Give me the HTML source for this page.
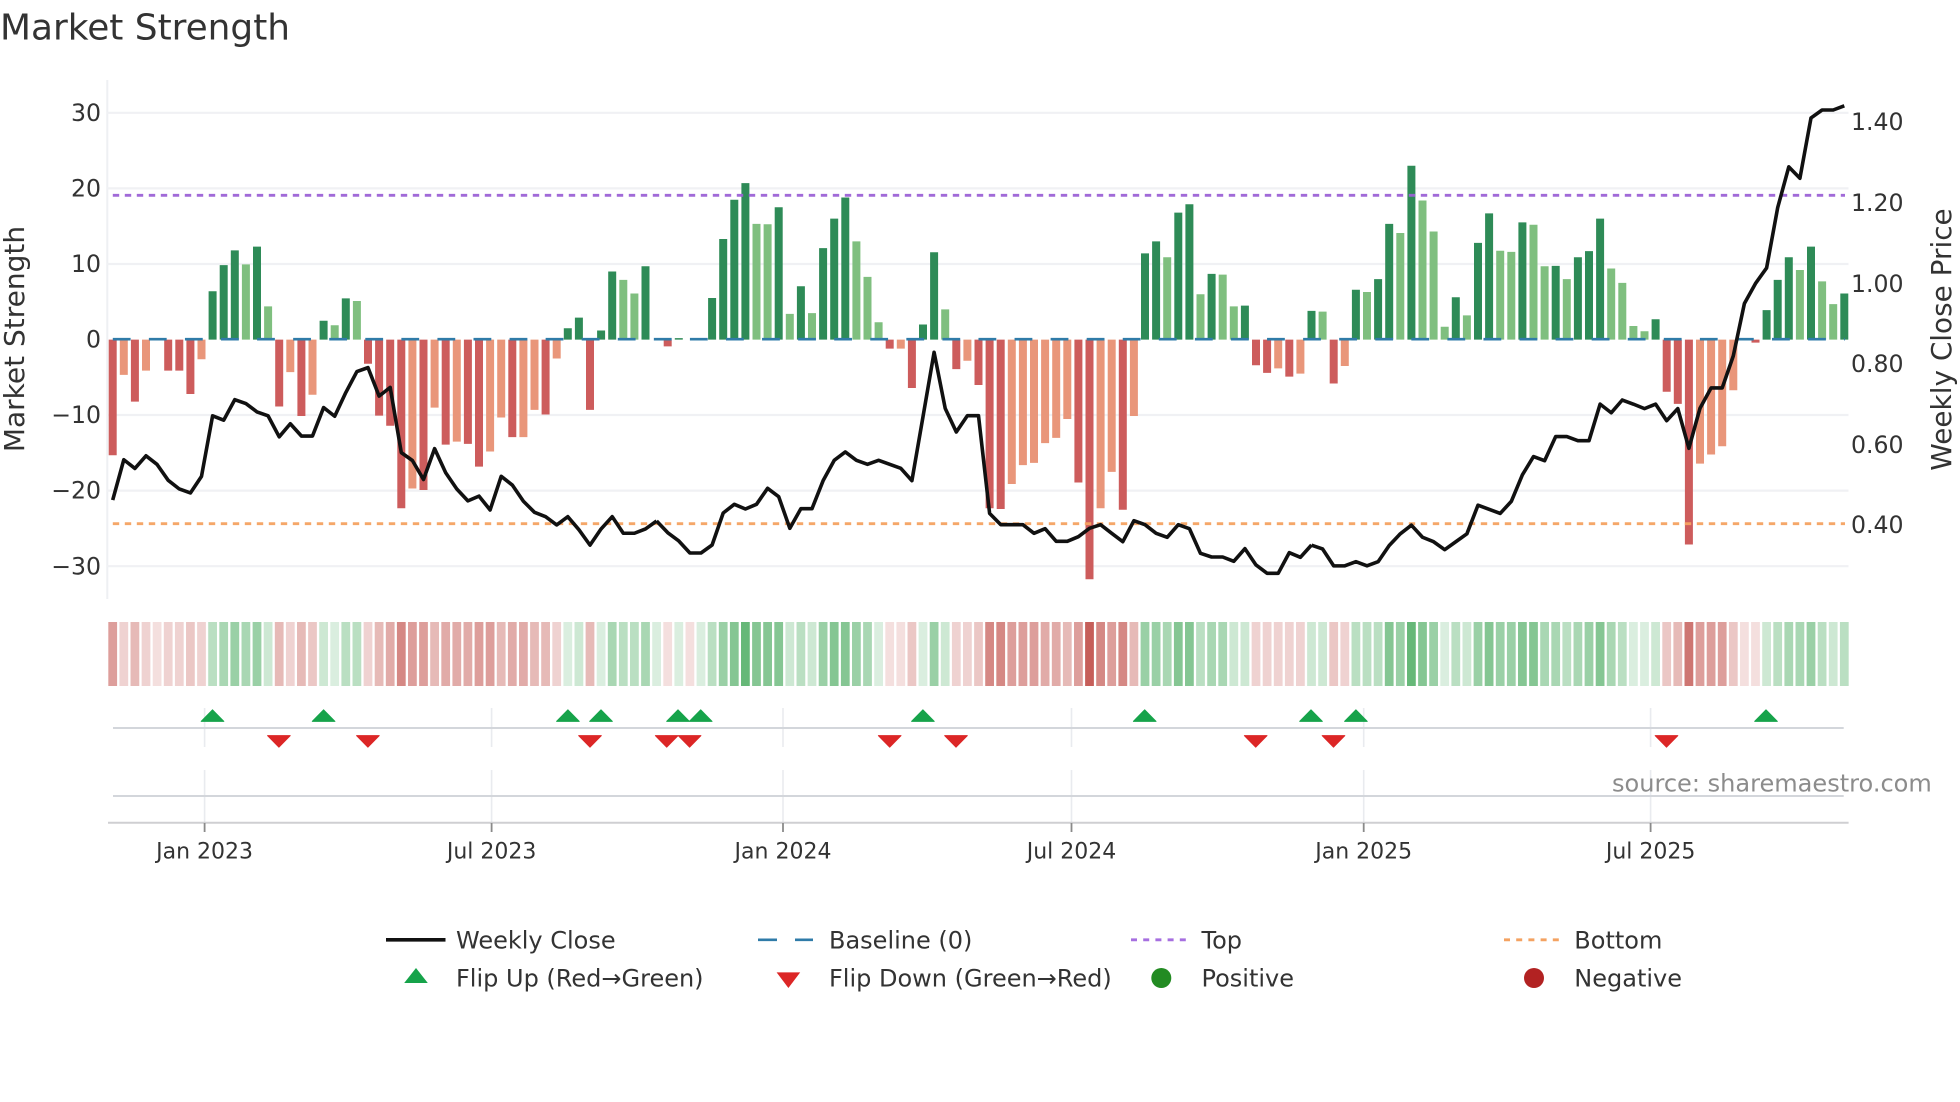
<!DOCTYPE html>
<html><head><meta charset="utf-8"><title>Market Strength</title>
<style>html,body{margin:0;padding:0;background:#fff}svg{display:block}text{font-family:"DejaVu Sans","Liberation Sans",sans-serif;fill:#333}</style></head>
<body>
<svg xmlns="http://www.w3.org/2000/svg" width="1960" height="1102" viewBox="0 0 1960 1102">
<rect width="1960" height="1102" fill="#fff"/>
<text x="0" y="39.5" font-size="35.9">Market Strength</text>
<!-- grid -->
<path d="M107.3 80V599" stroke="#eef0f3" stroke-width="2" fill="none"/>
<path d="M107 112.8H1848.5M107 188.4H1848.5M107 264H1848.5M107 415H1848.5M107 490.6H1848.5M107 566.2H1848.5" stroke="#f0f1f4" stroke-width="2.2" fill="none"/>
<!-- bars -->
<g transform="translate(112.7 339.6) scale(11.1 -7.56)" fill="none" stroke-width=".72">
<path stroke="#cd5c5c" d="M0 0V-15.3M2 0V-8.2M5 0V-4.1M6 0V-4.1M7 0V-7.2M15 0V-8.85M17 0V-10.1M23 0V-3.2M24 0V-10.05M25 0V-11.4M26 0V-22.3M28 0V-19.9M30 0V-13.9M32 0V-13.8M33 0V-16.8M36 0V-12.9M39 0V-9.9M43 0V-9.3M50 0V-.9M70 0V-1.2M72 0V-6.4M76 0V-3.9M78 0V-6M79 0V-22.3M80 0V-22.4M87 0V-18.9M88 0V-31.7M91 0V-22.5M103 0V-3.4M104 0V-4.4M106 0V-4.9M110 0V-5.8M140 0V-6.9M141 0V-8.5M142 0V-27.1M148 0V-.4"/>
<path stroke="#e9967a" d="M1 0V-4.66M3 0V-4.1M8 0V-2.6M16 0V-4.3M18 0V-7.3M27 0V-19.7M29 0V-9M31 0V-13.5M34 0V-14.8M35 0V-10.3M37 0V-12.9M38 0V-9.3M40 0V-2.5M71 0V-1.2M77 0V-2.8M81 0V-19.1M82 0V-16.6M83 0V-16.3M84 0V-13.7M85 0V-13M86 0V-10.5M89 0V-22.3M90 0V-17.5M92 0V-10.1M105 0V-3.8M107 0V-4.5M111 0V-3.5M143 0V-16.4M144 0V-15.2M145 0V-14.1M146 0V-6.7"/>
<path stroke="#2e8b57" d="M9 0V6.4M10 0V9.85M11 0V11.8M13 0V12.3M19 0V2.5M21 0V5.45M41 0V1.5M42 0V2.9M44 0V1.2M45 0V9M48 0V9.7M51 0V.2M54 0V5.5M55 0V13.3M56 0V18.5M57 0V20.7M60 0V17.5M62 0V7.05M64 0V12.1M65 0V16M66 0V18.8M73 0V2M74 0V11.55M93 0V11.4M94 0V13M96 0V16.8M97 0V17.9M99 0V8.7M102 0V4.5M108 0V3.8M112 0V6.6M114 0V8M115 0V15.3M117 0V23M121 0V5.6M123 0V12.8M124 0V16.7M127 0V15.5M130 0V9.75M132 0V10.9M133 0V11.7M134 0V16M139 0V2.7M149 0V3.9M150 0V7.9M151 0V10.9M153 0V12.3M156 0V6.1"/>
<path stroke="#7fbf7f" d="M12 0V9.95M14 0V4.4M20 0V1.9M22 0V5.1M46 0V7.9M47 0V6.1M61 0V3.4M63 0V3.5M58 0V15.3M59 0V15.25M67 0V13M68 0V8.3M69 0V2.3M75 0V4M95 0V10.9M98 0V6M100 0V8.6M101 0V4.4M109 0V3.7M113 0V6.3M116 0V14.1M118 0V18.4M119 0V14.3M120 0V1.7M122 0V3.2M125 0V11.75M126 0V11.6M128 0V15.2M129 0V9.7M131 0V8M135 0V9.4M136 0V7.5M137 0V1.8M138 0V1.1M152 0V9.2M154 0V7.7M155 0V4.7"/>
</g>
<!-- reference lines -->
<path d="M112.8 339.2H1845" stroke="#2f7ba8" stroke-width="2.6" stroke-dasharray="17.8 18.27" fill="none"/>
<path d="M112.8 195.3H1845" stroke="#9c62d6" stroke-opacity=".95" stroke-width="2.8" stroke-dasharray="6.4 5.6" fill="none"/>
<path d="M112.8 523.7H1845" stroke="#f4a261" stroke-opacity=".95" stroke-width="2.8" stroke-dasharray="6.4 5.6" fill="none"/>
<!-- weekly close -->
<g fill="none" stroke="#111" stroke-width="3.6" stroke-linejoin="round">
<polyline vector-effect="non-scaling-stroke" transform="translate(112.7 0) scale(11.1 .3953)" points="0,1265 1,1163 2,1185 3,1153 4,1175 5,1215 6,1237 7,1247 8,1205 9,1052 10,1063 11,1011 12,1021 13,1042 14,1052 15,1105 16,1072 17,1103 18,1103 19,1031 20,1053 21,993 22,940 23,930 24,1002 25,980 26,1145 27,1165 28,1213 29,1135 30,1196 31,1237 32,1267 33,1255 34,1290 35,1205 36,1227 37,1268 38,1296 39,1307 40,1328 41,1307 42,1340 43,1379 44,1338 45,1307 46,1349 47,1349 48,1338 49,1318"/>
<polyline vector-effect="non-scaling-stroke" transform="translate(112.7 120) scale(11.1 .33333)" points="49,1203 50,1238 51,1263 52,1299 53,1299 54,1275 55,1179 56,1153 57,1167 58,1153 59,1105 60,1130 61,1225 62,1166 63,1166 64,1082 65,1021 66,996 67,1021 68,1033 69,1021 70,1033 71,1045 72,1082 73,890 74,697 75,865 76,936 77,887 78,887 79,1180 80,1214 81,1214 82,1214 83,1240 84,1226 85,1264 86,1264 87,1250 88,1225 89,1214 90,1240 91,1265 92,1202 93,1214 94,1240 95,1252 96,1214 97,1226 98,1300 99,1311 100,1311 101,1324 102,1286 103,1335 104,1360 105,1360 106,1298 107,1312 108,1275"/>
<polyline vector-effect="non-scaling-stroke" transform="translate(112.7 80) scale(11.1 .34483)" points="108,1349 109,1360 110,1409 111,1409 112,1397 113,1409 114,1397 115,1350 116,1316 117,1291 118,1326 119,1339 120,1362 121,1339 122,1316 123,1233 124,1245 125,1257 126,1222 127,1145 128,1092 129,1104 130,1034 131,1034 132,1046 133,1046 134,940 135,965 136,928 137,940 138,953 139,940 140,988 141,953 142,1068 143,952 144,893 145,893 146,800 147,648 148,590 149,545 150,370 151,252 152,285 153,110 154,87 155,87 156,75"/>
</g>
<!-- y ticks -->
<g font-size="23.6" text-anchor="end">
<text x="101" y="121">30</text><text x="101" y="196.6">20</text><text x="101" y="272.1">10</text><text x="101" y="347.5">0</text><text x="101" y="423.1">−10</text><text x="101" y="498.7">−20</text><text x="101" y="574.3">−30</text>
</g>
<g font-size="23.6">
<text x="1851" y="129.8">1.40</text><text x="1851" y="210.8">1.20</text><text x="1851" y="291.8">1.00</text><text x="1851" y="372.2">0.80</text><text x="1851" y="452.9">0.60</text><text x="1851" y="533.2">0.40</text>
</g>
<text transform="translate(24 339) rotate(-90)" font-size="28" text-anchor="middle">Market Strength</text>
<text transform="translate(1951 339.5) rotate(-90)" font-size="27.9" text-anchor="middle">Weekly Close Price</text>
<!-- heat strip -->
<g transform="translate(112.7 622) scale(11.1 64)" fill="none" stroke-width=".79">
<g stroke="#c65e59">
<path stroke-opacity=".2" d="M4 0V1M50 0V1M52 0V1M70 0V1M71 0V1M147 0V1M148 0V1"/>
<path stroke-opacity=".28" d="M1 0V1M3 0V1M5 0V1M6 0V1M8 0V1M16 0V1M23 0V1M40 0V1M76 0V1M77 0V1M103 0V1M104 0V1M105 0V1M106 0V1M107 0V1M111 0V1"/>
<path stroke-opacity=".35" d="M7 0V1M18 0V1M72 0V1M78 0V1M110 0V1M140 0V1M146 0V1"/>
<path stroke-opacity=".43" d="M2 0V1M15 0V1M17 0V1M24 0V1M29 0V1M35 0V1M38 0V1M39 0V1M43 0V1M86 0V1M92 0V1M141 0V1"/>
<path stroke-opacity=".52" d="M25 0V1M30 0V1M31 0V1M32 0V1M36 0V1M37 0V1M84 0V1M85 0V1"/>
<path stroke-opacity=".6" d="M0 0V1M27 0V1M28 0V1M33 0V1M34 0V1M81 0V1M82 0V1M83 0V1M87 0V1M90 0V1M143 0V1M144 0V1M145 0V1"/>
<path stroke-opacity=".74" d="M26 0V1M79 0V1M80 0V1M89 0V1M91 0V1"/>
<path stroke-opacity=".85" d="M142 0V1"/>
<path d="M88 0V1"/>
</g>
<g stroke="#66b878">
<path stroke-opacity=".24" d="M20 0V1M41 0V1M44 0V1M49 0V1M51 0V1M53 0V1M69 0V1M73 0V1M120 0V1M137 0V1M138 0V1"/>
<path stroke-opacity=".33" d="M14 0V1M19 0V1M42 0V1M61 0V1M63 0V1M75 0V1M101 0V1M102 0V1M108 0V1M109 0V1M122 0V1M139 0V1M149 0V1M155 0V1"/>
<path stroke-opacity=".45" d="M9 0V1M21 0V1M22 0V1M46 0V1M47 0V1M54 0V1M62 0V1M98 0V1M112 0V1M113 0V1M114 0V1M121 0V1M131 0V1M136 0V1M150 0V1M154 0V1M156 0V1"/>
<path stroke-opacity=".56" d="M10 0V1M12 0V1M45 0V1M48 0V1M68 0V1M95 0V1M99 0V1M100 0V1M129 0V1M130 0V1M132 0V1M135 0V1M151 0V1M152 0V1"/>
<path stroke-opacity=".66" d="M11 0V1M13 0V1M55 0V1M64 0V1M67 0V1M74 0V1M93 0V1M94 0V1M116 0V1M119 0V1M123 0V1M125 0V1M126 0V1M133 0V1M153 0V1"/>
<path stroke-opacity=".8" d="M56 0V1M58 0V1M59 0V1M60 0V1M65 0V1M66 0V1M96 0V1M97 0V1M115 0V1M118 0V1M124 0V1M127 0V1M128 0V1M134 0V1"/>
<path d="M57 0V1M117 0V1"/>
</g>
</g>
<!-- lower panels -->
<path d="M204.6 708V747M491.6 708V747M783 708V747M1071.5 708V747M1363.7 708V747M1650.6 708V747M204.6 770V823M491.6 770V823M783 770V823M1071.5 770V823M1363.7 770V823M1650.6 770V823" stroke="#e9ebef" stroke-width="1.6" fill="none"/>
<path d="M113 728H1843.7M113 796H1843.7" stroke="#d3d6db" stroke-width="2" fill="none"/>
<path d="M108 822.8H1848.6" stroke="#cfcfd2" stroke-width="2" fill="none"/>
<path d="M204.6 823V832M491.6 823V832M783 823V832M1071.5 823V832M1363.7 823V832M1650.6 823V832" stroke="#8a8a8a" stroke-width="1.8" fill="none"/>
<path fill="#16a34a" stroke="#16a34a" stroke-width="1" stroke-linejoin="round" d="M212.5 709.8l11.3 11.6h-22.6zM323.6 709.8l11.3 11.6h-22.6zM567.9 709.8l11.3 11.6h-22.6zM601 709.8l11.3 11.6h-22.6zM678 709.8l11.3 11.6h-22.6zM700.7 709.8l11.3 11.6h-22.6zM922.9 709.8l11.3 11.6h-22.6zM1144.7 709.8l11.3 11.6h-22.6zM1311 709.8l11.3 11.6h-22.6zM1355.9 709.8l11.3 11.6h-22.6zM1766 709.8l11.3 11.6h-22.6z"/>
<path fill="#dc2626" stroke="#dc2626" stroke-width="1" stroke-linejoin="round" d="M278.9 747.2l-11.3-11.6h22.6zM367.9 747.2l-11.3-11.6h22.6zM590 747.2l-11.3-11.6h22.6zM666.7 747.2l-11.3-11.6h22.6zM689.6 747.2l-11.3-11.6h22.6zM889.7 747.2l-11.3-11.6h22.6zM956 747.2l-11.3-11.6h22.6zM1255.7 747.2l-11.3-11.6h22.6zM1333.5 747.2l-11.3-11.6h22.6zM1666.5 747.2l-11.3-11.6h22.6z"/>
<g font-size="22" text-anchor="middle">
<text x="204.6" y="858.5">Jan 2023</text><text x="491.6" y="858.5">Jul 2023</text><text x="783" y="858.5">Jan 2024</text><text x="1071.5" y="858.5">Jul 2024</text><text x="1363.7" y="858.5">Jan 2025</text><text x="1650.6" y="858.5">Jul 2025</text>
</g>
<text x="1612" y="791.7" font-size="24.05" style="fill:#8c8c8c">source: sharemaestro.com</text>
<!-- legend -->
<path d="M386 939.8H445.5" stroke="#111" stroke-width="3.6" fill="none"/>
<path d="M758 939.8H813" stroke="#2f7ba8" stroke-width="2.6" stroke-dasharray="19 18" fill="none"/>
<path d="M1131 939.8H1186" stroke="#a66fe0" stroke-width="2.8" stroke-dasharray="6 6.2" fill="none"/>
<path d="M1504 939.8H1559" stroke="#f4a261" stroke-width="2.8" stroke-dasharray="6 6.2" fill="none"/>
<path d="M416 968l11.8 15h-23.6z" fill="#16a34a"/>
<path d="M788.4 988l-11.8-15.6h23.6z" fill="#dc2626"/>
<circle cx="1161.3" cy="978" r="10" fill="#228b22"/>
<circle cx="1534" cy="978" r="10" fill="#b22222"/>
<g font-size="24">
<text x="456" y="948.3">Weekly Close</text><text x="829" y="948.3">Baseline (0)</text><text x="1201.5" y="948.3">Top</text><text x="1574.3" y="948.3">Bottom</text>
<text x="456" y="986.7">Flip Up (Red→Green)</text><text x="829" y="986.7">Flip Down (Green→Red)</text><text x="1201.5" y="986.7">Positive</text><text x="1574.3" y="986.7">Negative</text>
</g>
</svg>
</body></html>
